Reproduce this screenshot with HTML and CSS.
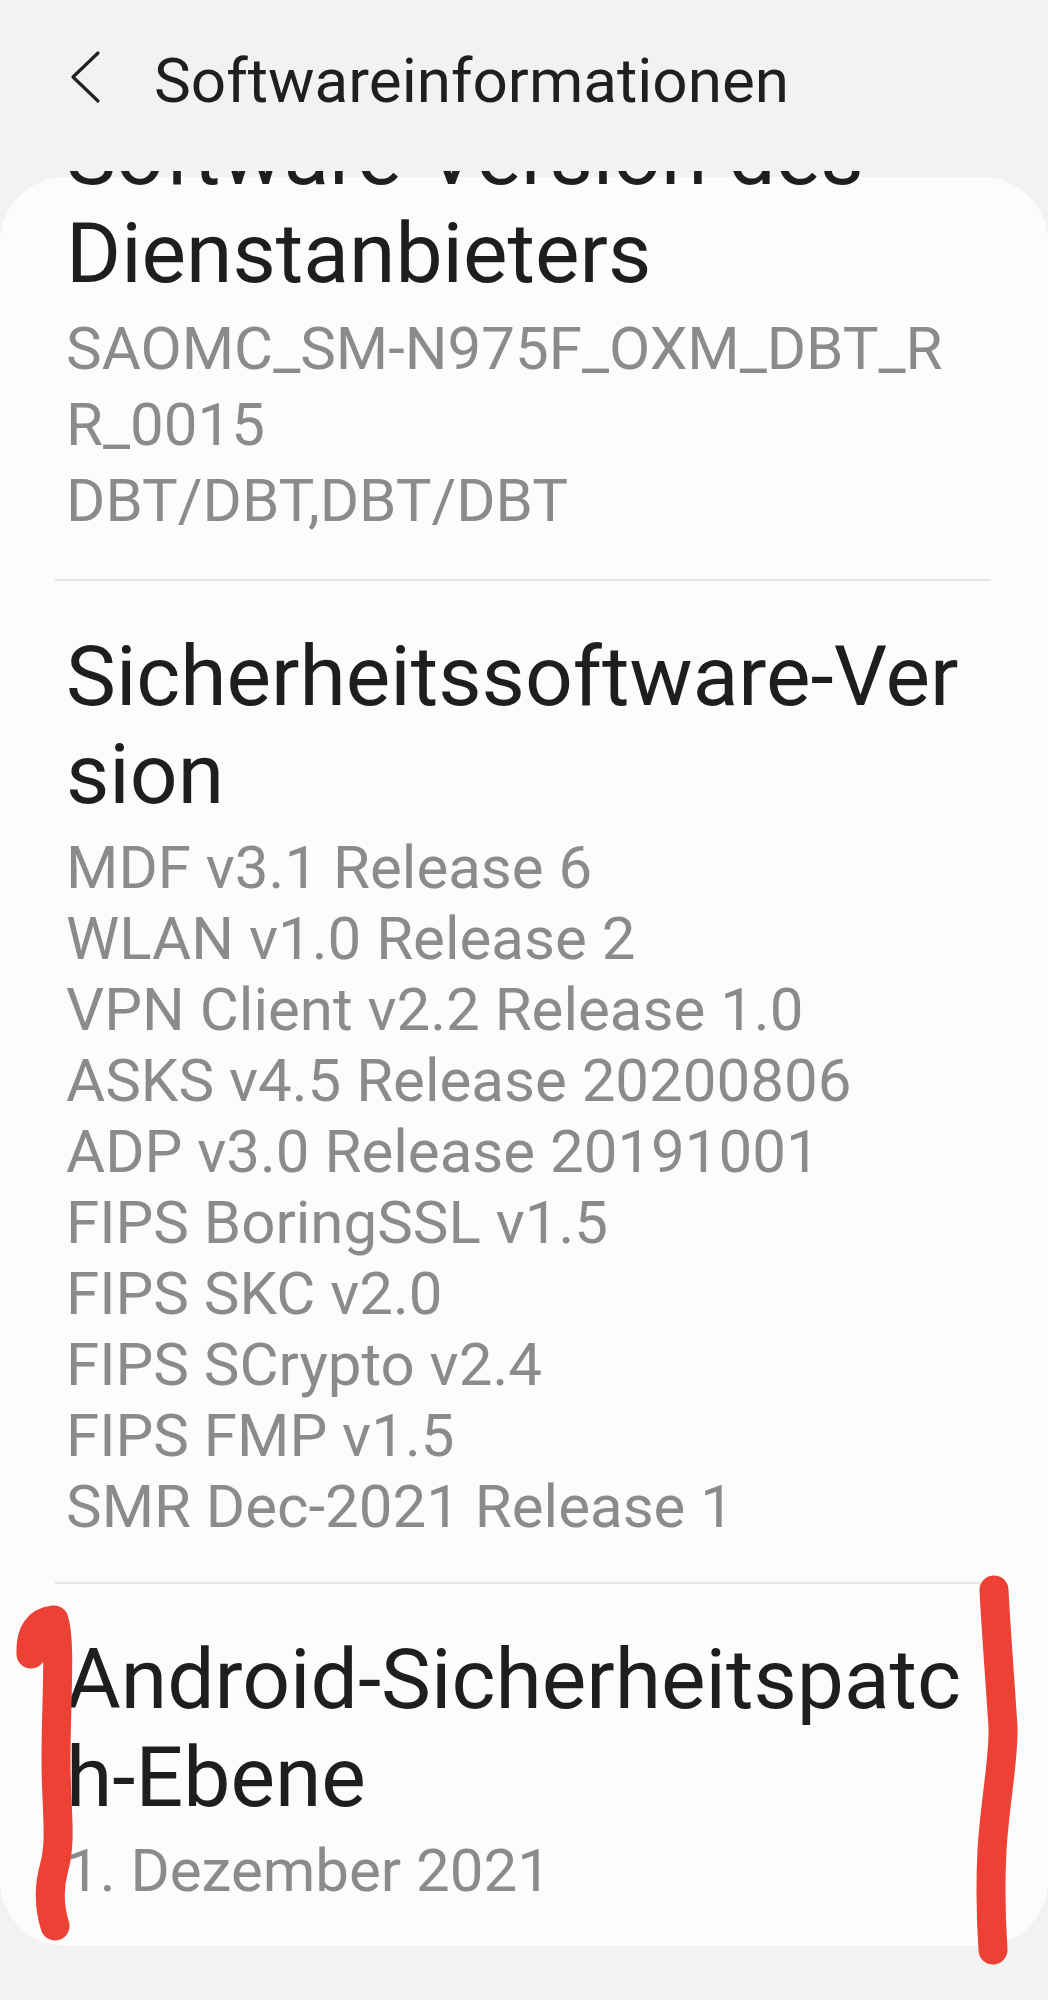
FILE: index.html
```html
<!DOCTYPE html>
<html lang="de">
<head>
    <meta charset="UTF-8">
    <title>Softwareinformationen</title>
    <link rel="stylesheet" href="styles.css">
</head>

<body>

    <div id="screen">

        <!-- top bar -->
        <div class="top_bar">
            <svg class="back" width="34" height="56" viewBox="0 0 34 56">
                <path d="M30 4 L5 28 L30 52" />
            </svg>
            <h1 class="title">Softwareinformationen</h1>
        </div>

        <!-- list (scrolled a bit, first title is cut off) -->
        <div class="scroll_area">
            <div class="card">

                <div class="item first">
                    <h2 class="item_title">
                        <span>Software-Version des</span>
                        <span>Dienstanbieters</span>
                    </h2>
                    <p class="item_value tall">
                        <span>SAOMC_SM-N975F_OXM_DBT_R</span>
                        <span>R_0015</span>
                        <span>DBT/DBT,DBT/DBT</span>
                    </p>
                </div>
                <hr>

                <div class="item">
                    <h2 class="item_title">
                        <span>Sicherheitssoftware-Ver</span>
                        <span>sion</span>
                    </h2>
                    <p class="item_value">
                        <span>MDF v3.1 Release 6</span>
                        <span>WLAN v1.0 Release 2</span>
                        <span>VPN Client v2.2 Release 1.0</span>
                        <span>ASKS v4.5 Release 20200806</span>
                        <span>ADP v3.0 Release 20191001</span>
                        <span>FIPS BoringSSL v1.5</span>
                        <span>FIPS SKC v2.0</span>
                        <span>FIPS SCrypto v2.4</span>
                        <span>FIPS FMP v1.5</span>
                        <span>SMR Dec-2021 Release 1</span>
                    </p>
                </div>
                <hr>

                <div class="item">
                    <h2 class="item_title">
                        <span>Android-Sicherheitspatc</span>
                        <span>h-Ebene</span>
                    </h2>
                    <p class="item_value">
                        <span>1. Dezember 2021</span>
                    </p>
                </div>

            </div>
        </div>

        <!-- red pen marks drawn on the screenshot -->
        <svg class="marks" width="1048" height="2000" viewBox="0 0 1048 2000">
            <path d="M31 1654 C30 1632 38 1622 54 1620 C61 1642 56 1700 56 1760 C56 1810 62 1840 54 1868 C48 1890 50 1910 55 1926" />
            <path d="M994 1590 C996 1630 1000 1680 1003 1727 C1004 1760 995 1800 992 1850 C990 1890 991 1920 993 1950" />
        </svg>

    </div>

</body>
</html>
```

FILE: styles.css
```css
* {
    margin: 0;
    padding: 0;
    box-sizing: border-box;
}

body {
    background-color: #f2f2f2;
    font-family: Roboto, "Noto Sans", sans-serif;
}

#screen {
    position: relative;
    width: 1048px;
    min-height: 2000px;
}

/* top bar */
.top_bar {
    display: flex;
    align-items: flex-start;
    height: 171px;
    padding: 45px 0 0 68px;
}

.back {
    margin-top: 4px;
    fill: none;
    stroke: #222222;
    stroke-width: 3.2;
    stroke-linecap: round;
    stroke-linejoin: round;
}

.title {
    margin-left: 52px;
    font-size: 62px;
    font-weight: 400;
    line-height: 71px;
    color: #1f1f1f;
}

/* list */
.scroll_area {
    overflow: hidden;
}

.card {
    display: flow-root;
    margin-top: 6px;
    background-color: #fcfcfc;
    border-radius: 66px;
}

.item {
    padding: 47px 0 40px 66px;
}

.item.first {
    padding-top: 0;
}

.item.first .item_title {
    margin-top: -70px;
}

.item_title {
    font-size: 84px;
    font-weight: 400;
    line-height: 98px;
    color: #1e1e1e;
}

.item_value {
    margin-top: 8px;
    font-size: 60px;
    line-height: 71px;
    color: #8b8b8b;
}

.item_value.tall {
    line-height: 76px;
}

.item_title span,
.item_value span {
    display: block;
    white-space: nowrap;
}

hr {
    border: 0;
    border-top: 2px solid #e5e5e5;
    margin: 0 57px 0 55px;
}

/* pen marks */
.marks {
    position: absolute;
    top: 0;
    left: 0;
    pointer-events: none;
    fill: none;
    stroke: #ee4136;
    stroke-width: 29;
    stroke-linecap: round;
    stroke-linejoin: round;
}
```
